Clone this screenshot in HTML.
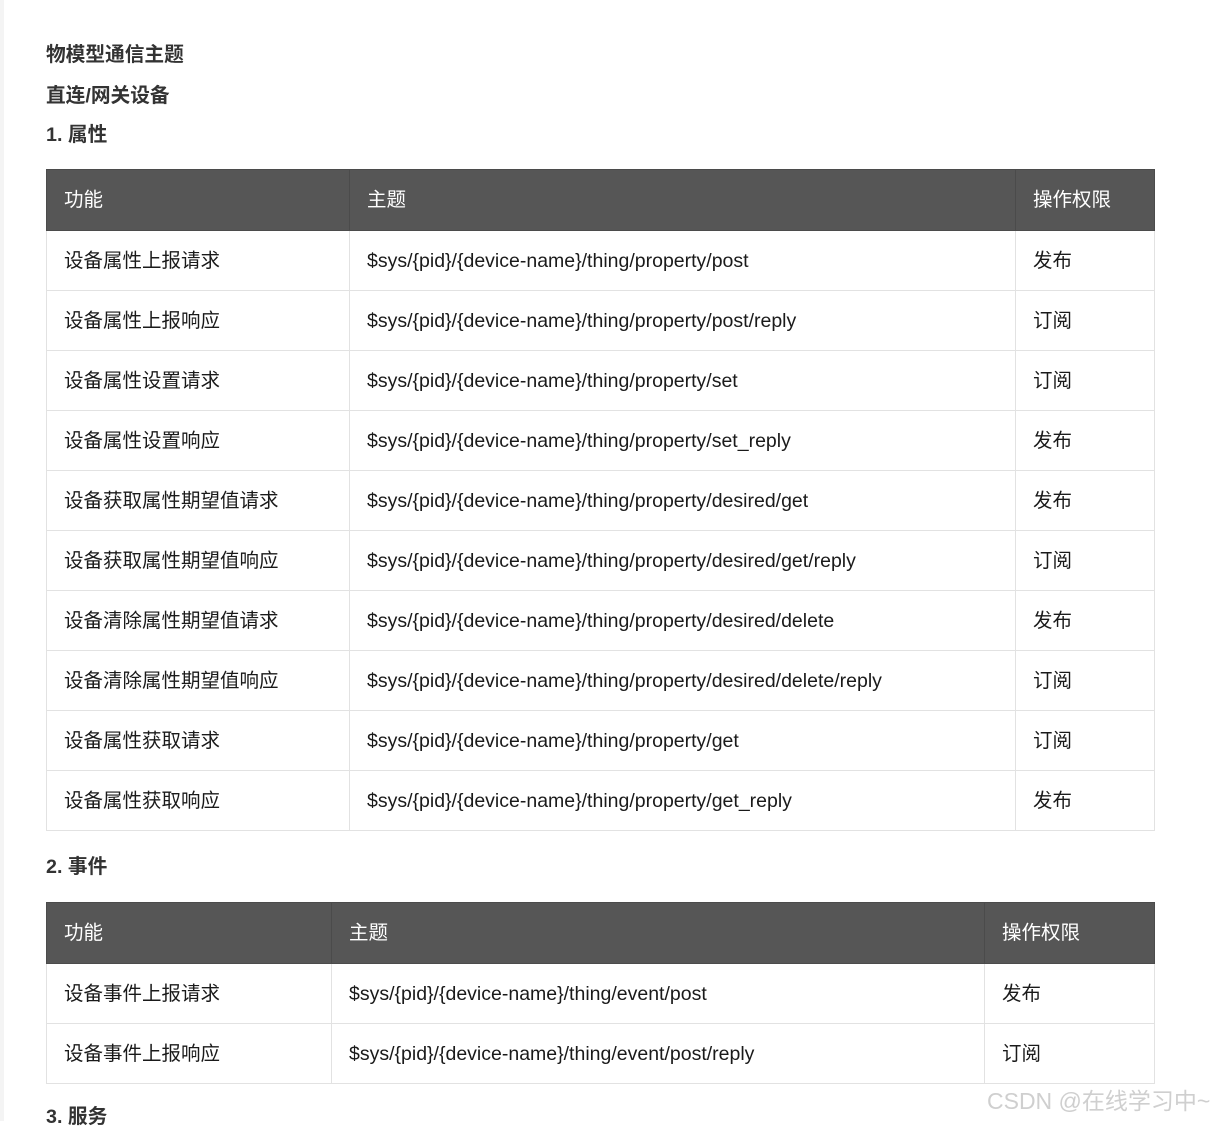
<!DOCTYPE html>
<html><head><meta charset="utf-8"><style>
body{margin:0;background:#fff;width:1212px;height:1121px;overflow:hidden;position:relative;font-family:"Liberation Sans","Noto Sans CJK SC",sans-serif;}
.strip{position:absolute;left:0;top:0;width:4px;height:1121px;background:#f4f4f4}
.h{position:absolute;left:46px;font-weight:bold;font-size:19.7px;color:#333;line-height:24px;white-space:nowrap}
table{position:absolute;left:46px;border-collapse:collapse;table-layout:fixed;font-size:19.5px;color:#1a1a1a;}
td,th{border:1px solid #e2e2e2;height:59px;padding:0 0 0 17px;text-align:left;font-weight:normal;white-space:nowrap;line-height:24px;vertical-align:middle}
td span,th span{display:block;height:24px;line-height:24px;overflow:visible}
th{background:#565656;color:#fff;border-color:#4b4b4b;height:60px}
.wm{position:absolute;left:987px;top:1087px;font-size:23px;line-height:28px;color:#cfcfcf;white-space:nowrap}
</style></head><body>
<div class="strip"></div>
<div class="h" style="top:43px">物模型通信主题</div>
<div class="h" style="top:84px">直连/网关设备</div>
<div class="h" style="top:123px">1. 属性</div>
<table style="top:169px;width:1108px">
<colgroup><col style="width:303px"><col style="width:666px"><col style="width:139px"></colgroup>
<tr><th><span>功能</span></th><th><span>主题</span></th><th><span>操作权限</span></th></tr>
<tr><td><span>设备属性上报请求</span></td><td><span>$sys/{pid}/{device-name}/thing/property/post</span></td><td><span>发布</span></td></tr>
<tr><td><span>设备属性上报响应</span></td><td><span>$sys/{pid}/{device-name}/thing/property/post/reply</span></td><td><span>订阅</span></td></tr>
<tr><td><span>设备属性设置请求</span></td><td><span>$sys/{pid}/{device-name}/thing/property/set</span></td><td><span>订阅</span></td></tr>
<tr><td><span>设备属性设置响应</span></td><td><span>$sys/{pid}/{device-name}/thing/property/set_reply</span></td><td><span>发布</span></td></tr>
<tr><td><span>设备获取属性期望值请求</span></td><td><span>$sys/{pid}/{device-name}/thing/property/desired/get</span></td><td><span>发布</span></td></tr>
<tr><td><span>设备获取属性期望值响应</span></td><td><span>$sys/{pid}/{device-name}/thing/property/desired/get/reply</span></td><td><span>订阅</span></td></tr>
<tr><td><span>设备清除属性期望值请求</span></td><td><span>$sys/{pid}/{device-name}/thing/property/desired/delete</span></td><td><span>发布</span></td></tr>
<tr><td><span>设备清除属性期望值响应</span></td><td><span>$sys/{pid}/{device-name}/thing/property/desired/delete/reply</span></td><td><span>订阅</span></td></tr>
<tr><td><span>设备属性获取请求</span></td><td><span>$sys/{pid}/{device-name}/thing/property/get</span></td><td><span>订阅</span></td></tr>
<tr><td><span>设备属性获取响应</span></td><td><span>$sys/{pid}/{device-name}/thing/property/get_reply</span></td><td><span>发布</span></td></tr>
</table>
<div class="h" style="top:855px">2. 事件</div>
<table style="top:902px;width:1108px">
<colgroup><col style="width:285px"><col style="width:653px"><col style="width:170px"></colgroup>
<tr><th><span>功能</span></th><th><span>主题</span></th><th><span>操作权限</span></th></tr>
<tr><td><span>设备事件上报请求</span></td><td><span>$sys/{pid}/{device-name}/thing/event/post</span></td><td><span>发布</span></td></tr>
<tr><td><span>设备事件上报响应</span></td><td><span>$sys/{pid}/{device-name}/thing/event/post/reply</span></td><td><span>订阅</span></td></tr>
</table>
<div class="h" style="top:1105px">3. 服务</div>
<div class="wm">CSDN @在线学习中~</div>
</body></html>
